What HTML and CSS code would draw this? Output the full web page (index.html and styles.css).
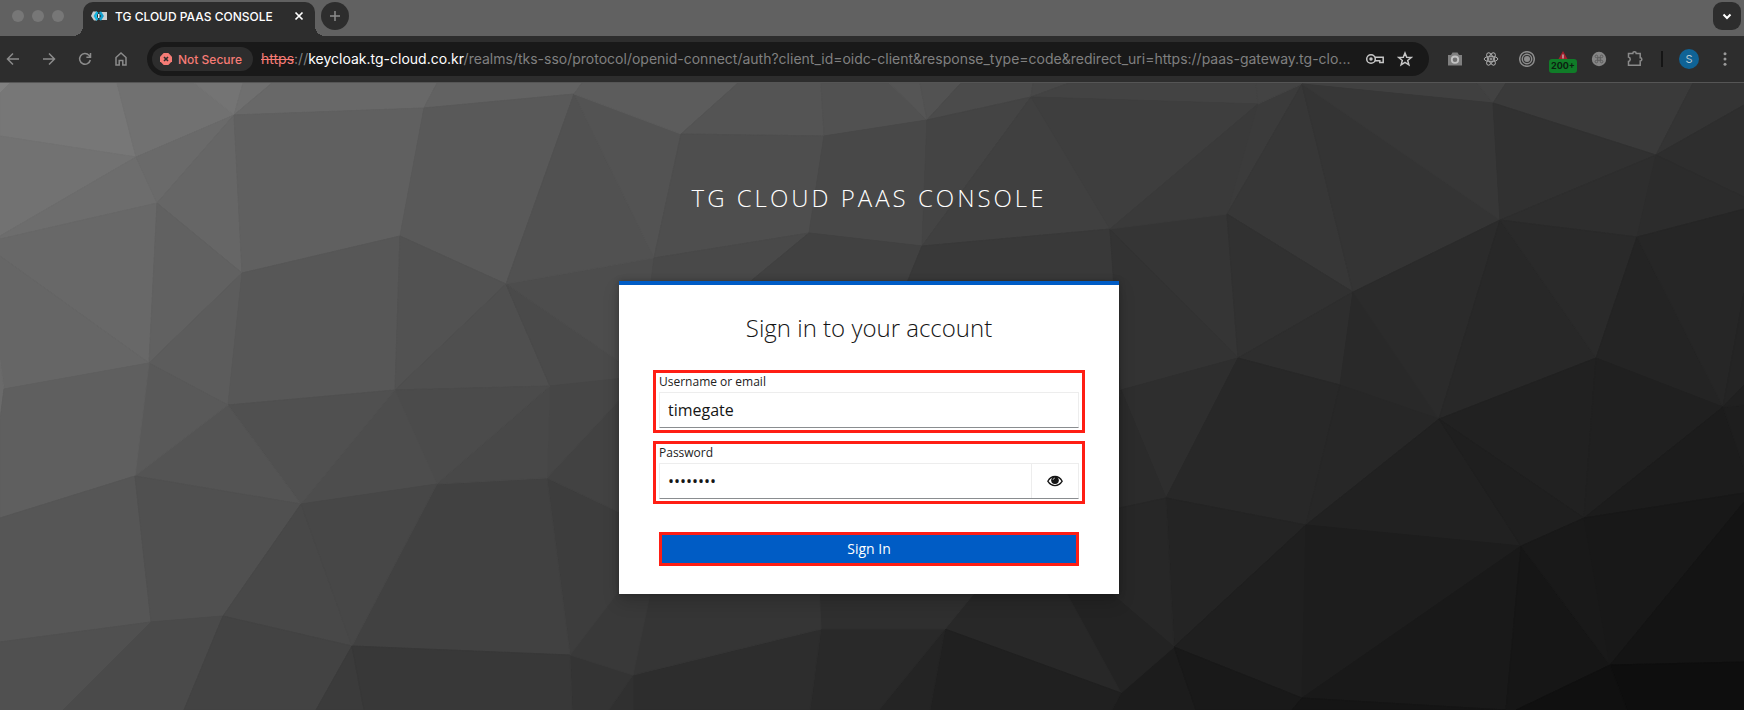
FILE: index.html
```html
<!DOCTYPE html>
<html lang="en">
<head>
<meta charset="utf-8">
<meta name="viewport" content="width=device-width, initial-scale=1">
<title>TG CLOUD PAAS CONSOLE</title>
<link rel="stylesheet" href="styles.css">
</head>
<body>
<header class="browser">
  <div class="tabstrip">
    <div class="lights"><span class="light"></span><span class="light"></span><span class="light"></span></div>
    <div class="tab">
      <svg class="favicon" viewBox="0 0 16 12" aria-hidden="true">
        <path d="M2 1.500h4v9H3L0 6zM10 2h6v8h-6z" fill="#c9cdcf"/>
        <path d="M6.500 2 4 6l2.500 4" fill="none" stroke="#12b5e0" stroke-width="2.400"/>
        <path d="M9 2 11.500 6 9 10" fill="none" stroke="#0f9fd0" stroke-width="2.400"/>
        <path d="M7 4h1.500v4H7z" fill="#e8f4f8"/>
      </svg>
      <span class="tab-title">TG CLOUD PAAS CONSOLE</span>
      <button class="tab-close" type="button" aria-label="Close tab">
        <svg viewBox="0 0 10 10" width="10" height="10"><path d="M1.500 1.500l7 7M8.500 1.500l-7 7" stroke="#fff" stroke-width="1.700" fill="none"/></svg>
      </button>
    </div>
    <button class="round-button" type="button" aria-label="New tab">
      <svg viewBox="0 0 12 12" width="12" height="12"><path d="M6 1v10M1 6h10" stroke="#8c8c8c" stroke-width="1.500"/></svg>
    </button>
    <button class="round-button tab-search" type="button" aria-label="Search tabs">
      <svg viewBox="0 0 10 10" width="10" height="10"><path d="M1.500 3.500 5 7l3.500-3.500" stroke="#fff" stroke-width="2" fill="none"/></svg>
    </button>
  </div>
  <div class="toolbar">
    <nav class="nav" aria-label="Browser navigation">
      <button class="icon-button" type="button" aria-label="Back"><svg viewBox="0 0 16 16"><path d="M14 8H3M8 2.500 2.500 8 8 13.500"/></svg></button>
      <button class="icon-button" type="button" aria-label="Forward"><svg viewBox="0 0 16 16"><path d="M2 8h11M8 2.500 13.500 8 8 13.500"/></svg></button>
      <button class="icon-button" type="button" aria-label="Reload"><svg viewBox="0 0 16 16"><path d="M13.300 9A5.400 5.400 0 1 1 12 4.200L13.500 6M13.500 2v4.200H9.400"/></svg></button>
      <button class="icon-button" type="button" aria-label="Home"><svg viewBox="0 0 16 16"><path d="M3 6.500 8 2l5 4.500V14H9.800V9.500H6.200V14H3z"/></svg></button>
    </nav>
    <div class="address">
      <button class="security" type="button">
        <svg viewBox="0 0 12 12" width="12" height="12" aria-hidden="true"><path d="M3.700 0h4.600L12 3.700v4.600L8.300 12H3.700L0 8.300V3.700z" fill="#f67c76"/><path d="M4 4l4 4M8 4L4 8" stroke="#2d2d2d" stroke-width="1.600"/></svg>
        Not Secure
      </button>
      <p class="url"><s class="scheme">https</s>://<span class="host">keycloak.tg-cloud.co.kr</span>/realms/tks-sso/protocol/openid-connect/auth?client_id=oidc-client&amp;response_type=code&amp;redirect_uri=https://paas-gateway.tg-clo...</p>
      <div class="address-actions">
        <button class="icon-button bright" type="button" aria-label="Manage passwords"><svg class="key" viewBox="0 0 20 14"><circle cx="6" cy="7" r="4.300"/><circle cx="6" cy="7" r="1" fill="#c7c7c7"/><path d="M10 5.200h8.200v5.300h-3.400V8.800H10"/></svg></button>
        <button class="icon-button bright" type="button" aria-label="Bookmark"><svg viewBox="0 0 16 16"><path d="M8 2l1.700 4.200 4.500.3-3.500 2.900 1.200 4.400L8 11.400l-3.900 2.400 1.200-4.400-3.500-2.900 4.500-.3z"/></svg></button>
      </div>
    </div>
    <div class="extensions">
      <button class="icon-button" type="button" aria-label="Screenshot"><svg viewBox="0 0 16 16"><path d="M1 4h3l1.500-2.500h5L12 4h3v10.500H1z" fill="#7f7f7f" stroke="none"/><circle cx="8" cy="8.700" r="3.200" stroke="#c2c2c2" stroke-width="1.800" fill="#707070"/></svg></button>
      <button class="icon-button" type="button" aria-label="React tools"><svg viewBox="0 0 16 16" class="react"><ellipse cx="8" cy="8" rx="6.800" ry="2.700"/><ellipse cx="8" cy="8" rx="6.800" ry="2.700" transform="rotate(60 8 8)"/><ellipse cx="8" cy="8" rx="6.800" ry="2.700" transform="rotate(120 8 8)"/><circle cx="8" cy="8" r="1"/></svg></button>
      <button class="icon-button" type="button" aria-label="Recorder"><svg viewBox="0 0 16 16"><circle cx="8" cy="8" r="7.300"/><circle cx="8" cy="8" r="4.700"/><circle cx="8" cy="8" r="2.300" fill="#8b8b8b"/></svg></button>
      <button class="icon-button alerts" type="button" aria-label="Alerts, 200+"><svg viewBox="0 0 16 16"><path d="M8 0l4.500 8h-9z" fill="#a31f2c" stroke="none"/><path d="M8 3.500v4" stroke="#ccc" stroke-width="1.200"/></svg><span class="badge">200+</span></button>
      <button class="icon-button" type="button" aria-label="Shortcuts"><svg viewBox="0 0 16 16"><circle cx="8" cy="8" r="7.200" fill="#858585" stroke="none"/><path d="M6.700 6.700h2.600v2.600H6.700zM6.700 6.700H5.400A1.300 1.300 0 1 1 6.700 5.400zM9.300 6.700V5.400A1.300 1.300 0 1 1 10.600 6.700zM9.300 9.300H10.600A1.300 1.300 0 1 1 9.300 10.600zM6.700 9.300V10.600A1.300 1.300 0 1 1 5.400 9.300z" stroke="#5a5a5a" stroke-width=".9"/></svg></button>
      <button class="icon-button" type="button" aria-label="Extensions"><svg viewBox="0 0 16 16"><path d="M1.500 2.500h4.300a1.700 1.700 0 0 1 3.400 0h4v4.200a1.600 1.600 0 0 1 0 3.200v4.300H1.500v-3.800a2.200 2.200 0 0 0 0-4.300z"/></svg></button>
      <span class="divider"></span>
      <button class="avatar" type="button" aria-label="Profile">S</button>
      <button class="icon-button" type="button" aria-label="Menu"><svg viewBox="0 0 16 16"><g fill="#9a9a9a" stroke="none"><circle cx="8" cy="2.700" r="1.500"/><circle cx="8" cy="8" r="1.500"/><circle cx="8" cy="13.300" r="1.500"/></g></svg></button>
    </div>
  </div>
</header>

<main class="page">
  <svg class="backdrop" viewBox="0 83 1744 627" preserveAspectRatio="none" aria-hidden="true">
    <polygon color="#808080" points="0,83 10,83 0,93"/>
    <polygon color="#777777" points="10,83 117,83 136,157 0,136 0,93"/>
    <polygon color="#717171" points="117,83 194,83 234,115 136,157"/>
    <polygon color="#747474" points="194,83 243,83 234,115"/>
    <polygon color="#6f6f6f" points="243,83 272,83 234,115"/>
    <polygon color="#686868" points="272,83 437,83 424,108 234,115"/>
    <polygon color="#626262" points="437,83 582,83 574,94 424,108"/>
    <polygon color="#727272" points="0,136 136,157 0,236"/>
    <polygon color="#6d6d6d" points="0,236 136,157 157,203 0,239"/>
    <polygon color="#6a6a6a" points="136,157 234,115 157,203"/>
    <polygon color="#666666" points="234,115 157,203 242,273"/>
    <polygon color="#606060" points="234,115 424,108 400,236 242,273"/>
    <polygon color="#595959" points="424,108 574,94 506,284 400,236"/>
    <polygon color="#686868" points="0,239 157,203 149,363 0,256"/>
    <polygon color="#666666" points="0,256 149,363 4,389 0,360"/>
    <polygon color="#6a6a6a" points="0,360 4,389 0,420"/>
    <polygon color="#616161" points="157,203 242,273 149,363"/>
    <polygon color="#5c5c5c" points="242,273 149,363 228,405"/>
    <polygon color="#575757" points="242,273 400,236 395,390 228,405"/>
    <polygon color="#525252" points="400,236 506,284 395,390"/>
    <polygon color="#4f4f4f" points="506,284 395,390 550,386"/>
    <polygon color="#4a4a4a" points="506,284 550,386 640,377 640,376"/>
    <polygon color="#4d4d4d" points="506,284 654,258 640,376"/>
    <polygon color="#515151" points="574,94 506,284 654,258"/>
    <polygon color="#535353" points="574,94 681,134 654,258"/>
    <polygon color="#5c5c5c" points="582,83 738,83 681,134 574,94"/>
    <polygon color="#545454" points="738,83 821,83 824,136 681,134"/>
    <polygon color="#515151" points="821,83 889,83 927,120 824,136"/>
    <polygon color="#555555" points="889,83 920,83 927,120"/>
    <polygon color="#525252" points="920,83 961,83 927,120"/>
    <polygon color="#4b4b4b" points="961,83 1033,83 1031,97 927,120"/>
    <polygon color="#484848" points="1033,83 1069,83 1031,97"/>
    <polygon color="#434343" points="1069,83 1256,83 1258,104 1031,97"/>
    <polygon color="#4e4e4e" points="681,134 824,136 809,233 654,258"/>
    <polygon color="#484848" points="824,136 927,120 922,246 809,233"/>
    <polygon color="#444444" points="927,120 1031,97 922,246"/>
    <polygon color="#404040" points="1031,97 922,246 1110,229"/>
    <polygon color="#3e3e3e" points="1031,97 1258,104 1110,229"/>
    <polygon color="#494949" points="654,258 809,233 740,290 650,290"/>
    <polygon color="#414141" points="809,233 922,246 904,290 740,290"/>
    <polygon color="#393939" points="922,246 1110,229 1115,290 904,290"/>
    <polygon color="#353535" points="1110,229 1227,214 1238,358"/>
    <polygon color="#333333" points="1110,229 1238,358 1121,390"/>
    <polygon color="#3a3a3a" points="1258,104 1227,214 1110,229"/>
    <polygon color="#3b3b3b" points="1258,104 1302,84 1227,214"/>
    <polygon color="#434343" points="1256,83 1302,83 1302,84 1258,104"/>
    <polygon color="#404040" points="1302,83 1477,83 1493,103 1302,84"/>
    <polygon color="#424242" points="1477,83 1506,83 1493,103"/>
    <polygon color="#3a3a3a" points="1506,83 1693,83 1656,155 1493,103"/>
    <polygon color="#343434" points="1693,83 1744,83 1744,105 1656,155"/>
    <polygon color="#2e2e2e" points="1744,105 1656,155 1744,197"/>
    <polygon color="#373737" points="1302,84 1227,214 1353,292"/>
    <polygon color="#343434" points="1302,84 1353,292 1500,220"/>
    <polygon color="#373737" points="1302,84 1493,103 1500,220"/>
    <polygon color="#313131" points="1493,103 1656,155 1500,220"/>
    <polygon color="#2e2e2e" points="1656,155 1500,220 1637,237"/>
    <polygon color="#2c2c2c" points="1656,155 1637,237 1744,209 1744,197"/>
    <polygon color="#313131" points="1227,214 1353,292 1238,358"/>
    <polygon color="#2e2e2e" points="1238,358 1353,292 1340,385"/>
    <polygon color="#292929" points="1353,292 1340,385 1439,419"/>
    <polygon color="#2b2b2b" points="1353,292 1500,220 1439,419"/>
    <polygon color="#282828" points="1500,220 1439,419 1596,358"/>
    <polygon color="#2a2a2a" points="1500,220 1637,237 1596,358"/>
    <polygon color="#242424" points="1637,237 1596,358 1723,407"/>
    <polygon color="#262626" points="1637,237 1744,209 1744,293 1723,407"/>
    <polygon color="#242424" points="1744,293 1744,385 1723,407"/>
    <polygon color="#212121" points="1596,358 1439,419 1584,518"/>
    <polygon color="#202020" points="1596,358 1584,518 1723,407"/>
    <polygon color="#2e2e2e" points="1238,358 1121,390 1166,498"/>
    <polygon color="#2b2b2b" points="1121,390 1166,498 1110,511"/>
    <polygon color="#282828" points="1238,358 1340,385 1306,525 1166,498"/>
    <polygon color="#272727" points="1340,385 1439,419 1306,525"/>
    <polygon color="#212121" points="1439,419 1306,525 1521,546"/>
    <polygon color="#1f1f1f" points="1439,419 1521,546 1584,518"/>
    <polygon color="#1c1c1c" points="1584,518 1723,407 1744,468 1744,493"/>
    <polygon color="#1e1e1e" points="1723,407 1744,405 1744,468"/>
    <polygon color="#202020" points="1723,407 1744,385 1744,405"/>
    <polygon color="#242424" points="1166,498 1306,525 1174,647"/>
    <polygon color="#272727" points="1166,498 1174,647 1105,588 1105,511"/>
    <polygon color="#1f1f1f" points="1306,525 1174,647 1302,698"/>
    <polygon color="#1d1d1d" points="1306,525 1521,546 1302,698"/>
    <polygon color="#191919" points="1521,546 1302,698 1506,710"/>
    <polygon color="#161616" points="1521,546 1610,665 1516,710 1506,710"/>
    <polygon color="#191919" points="1521,546 1584,518 1610,665"/>
    <polygon color="#181818" points="1584,518 1744,493 1744,502 1610,665"/>
    <polygon color="#141414" points="1610,665 1744,502 1744,662"/>
    <polygon color="#0e0e0e" points="1610,665 1744,662 1744,710 1627,710"/>
    <polygon color="#101010" points="1610,665 1627,710 1516,710"/>
    <polygon color="#1c1c1c" points="1174,647 1121,693 1112,710 1196,710"/>
    <polygon color="#191919" points="1174,647 1196,710 1292,710 1302,698"/>
    <polygon color="#151515" points="1302,698 1292,710 1506,710"/>
    <polygon color="#232323" points="1174,647 1121,693 1062,585 1105,588"/>
    <polygon color="#282828" points="945,629 1121,693 1062,585 981,585"/>
    <polygon color="#202020" points="945,629 1121,693 1112,710 930,710"/>
    <polygon color="#242424" points="945,629 930,710 879,710"/>
    <polygon color="#292929" points="821,629 945,629 879,710 810,710"/>
    <polygon color="#2d2d2d" points="821,629 810,710 633,710 633,675"/>
    <polygon color="#303030" points="633,675 633,710 609,710"/>
    <polygon color="#343434" points="570,655 633,675 609,710 572,710"/>
    <polygon color="#2f2f2f" points="821,629 945,629 981,585 819,585"/>
    <polygon color="#353535" points="633,675 821,629 819,585 652,585"/>
    <polygon color="#393939" points="570,655 633,675 652,585 623,585"/>
    <polygon color="#3d3d3d" points="547,478 570,655 625,583 625,515"/>
    <polygon color="#414141" points="437,484 547,478 570,655 352,646"/>
    <polygon color="#424242" points="547,478 625,394 625,515"/>
    <polygon color="#464646" points="550,386 547,478 625,394 625,378"/>
    <polygon color="#484848" points="550,386 437,484 547,478"/>
    <polygon color="#4b4b4b" points="395,390 550,386 437,484"/>
    <polygon color="#4d4d4d" points="395,390 437,484 301,504"/>
    <polygon color="#505050" points="395,390 228,405 301,504"/>
    <polygon color="#545454" points="228,405 135,476 301,504"/>
    <polygon color="#595959" points="149,363 228,405 135,476"/>
    <polygon color="#5f5f5f" points="4,389 149,363 135,476 0,518 0,420"/>
    <polygon color="#565656" points="0,518 135,476 151,622 0,642"/>
    <polygon color="#505050" points="135,476 301,504 223,616 151,622"/>
    <polygon color="#484848" points="301,504 223,616 352,646"/>
    <polygon color="#474747" points="301,504 437,484 352,646"/>
    <polygon color="#505050" points="0,642 151,622 63,710 0,710"/>
    <polygon color="#4a4a4a" points="151,622 223,616 184,710 63,710"/>
    <polygon color="#434343" points="223,616 184,710 316,710 352,646"/>
    <polygon color="#3b3b3b" points="352,646 316,710 364,710"/>
    <polygon color="#383838" points="352,646 364,710 572,710 570,655"/>
  </svg>

  <div class="brand">TG CLOUD PAAS CONSOLE</div>

  <section class="card">
    <h1 class="card-title">Sign in to your account</h1>
    <form>
      <div class="field">
        <label for="username">Username or email</label>
        <div class="control"><input id="username" type="text" value="timegate"></div>
      </div>
      <div class="field">
        <label for="password">Password</label>
        <div class="control">
          <input id="password" type="password" value="timegate">
          <button class="reveal" type="button" aria-label="Show password">
            <svg viewBox="0 0 16 12" width="16" height="12"><path d="M.8 6.200C2.500 3.200 5 1.500 8 1.500s5.500 1.700 7.200 4.700C13.500 9 11 10.600 8 10.600S2.500 9 .8 6.200z" fill="none" stroke="#151515" stroke-width="1.300"/><circle cx="8" cy="5.300" r="3.800" fill="#151515"/><path d="M6 5A2.200 2.200 0 0 1 8 3" fill="none" stroke="#fff" stroke-width=".6"/></svg>
          </button>
        </div>
      </div>
      <button class="submit" type="submit">Sign In</button>
    </form>
  </section>
</main>
</body>
</html>
```
FILE: styles.css
```css
* { box-sizing: border-box; }

body {
  margin: 0;
  min-height: 100vh;
  display: flex;
  flex-direction: column;
  font-family: "Open Sans", "Noto Sans", sans-serif;
  background: #2d2d2d;
}

button {
  margin: 0;
  padding: 0;
  border: 0;
  background: none;
  font: inherit;
  color: inherit;
}

/* Browser chrome */
.browser {
  font-family: Inter, Roboto, sans-serif;
  background: #2d2d2d;
  border-bottom: 1px solid #555;
}

.tabstrip {
  display: flex;
  align-items: flex-start;
  height: 36px;
  padding: 2px 3px 0 12px;
  background: #616161;
}

.lights {
  display: flex;
  gap: 8px;
  padding-top: 8px;
  margin-right: 19px;
}

.light {
  width: 12px;
  height: 12px;
  border-radius: 50%;
  background: #777;
}

.tab {
  position: relative;
  display: flex;
  align-items: center;
  width: 232px;
  height: 34px;
  padding: 0 10px 6px 8px;
  border-radius: 10px 10px 0 0;
  background: #2d2d2d;
}

.tab::before,
.tab::after {
  content: "";
  position: absolute;
  bottom: 0;
  width: 10px;
  height: 10px;
}

.tab::before {
  left: -10px;
  background: radial-gradient(circle at 0 0, transparent 10px, #2d2d2d 10px);
}

.tab::after {
  right: -10px;
  background: radial-gradient(circle at 100% 0, transparent 10px, #2d2d2d 10px);
}

.favicon {
  width: 16px;
  height: 12px;
  margin-right: 8px;
}

.tab-title {
  flex: 1;
  font-size: 12px;
  font-weight: 500;
  white-space: nowrap;
  color: #fff;
}

.tab-close {
  display: grid;
  place-items: center;
  width: 12px;
  height: 12px;
}

.round-button {
  display: grid;
  place-items: center;
  width: 28px;
  height: 28px;
  margin-left: 6px;
  border-radius: 50%;
  background: #2d2d2d;
}

.tab-search {
  margin-left: auto;
  border-radius: 9px;
}

.toolbar {
  display: flex;
  align-items: center;
  height: 46px;
  padding: 0 11px 0 5px;
}

.nav,
.extensions {
  display: flex;
  align-items: center;
  gap: 20px;
}

.icon-button {
  position: relative;
  display: grid;
  place-items: center;
  width: 16px;
  height: 16px;
}

.icon-button svg {
  width: 16px;
  height: 16px;
  fill: none;
  stroke: #8b8b8b;
  stroke-width: 1.500;
}

.icon-button.bright svg { stroke: #c7c7c7; }
.icon-button .key { width: 20px; height: 14px; }
.icon-button .react { stroke: #a8a8a8; stroke-width: 1; }

.address {
  flex: 1;
  display: flex;
  align-items: center;
  min-width: 0;
  height: 34px;
  margin: 0 18px;
  padding: 0 16px 0 5px;
  border-radius: 17px;
  background: #191919;
}

.security {
  flex: none;
  display: flex;
  align-items: center;
  gap: 6px;
  height: 24px;
  margin-right: 8px;
  padding: 0 11px 0 8px;
  border-radius: 12px;
  background: #2d2d2d;
  font-size: 12px;
  font-weight: 500;
  color: #f67c76;
}

.url {
  flex: 1;
  min-width: 0;
  margin: 0 8px 0 0;
  overflow: hidden;
  text-overflow: ellipsis;
  white-space: nowrap;
  font-size: 14px;
  line-height: 20px;
  color: #808080;
}

.scheme { color: #f67c76; }
.host { color: #fff; }

.address-actions {
  display: flex;
  gap: 16px;
}

.alerts .badge {
  position: absolute;
  left: -6px;
  top: 8px;
  width: 28px;
  height: 14px;
  border-radius: 3px;
  background: #107c28;
  font-size: 9px;
  font-weight: 700;
  line-height: 14px;
  text-align: center;
  color: #0c1f10;
}

.divider {
  width: 2px;
  height: 16px;
  margin: 0 -4px 0 -2px;
  background: #151515;
}

.avatar {
  width: 20px;
  height: 20px;
  margin-right: -2px;
  border-radius: 50%;
  background: #0f6396;
  font-size: 11px;
  color: #b8c8d2;
}

/* Login page */
.page {
  position: relative;
  flex: 1;
  display: flex;
  flex-direction: column;
  align-items: center;
  padding: 97px 6px 40px 0;
}

.backdrop {
  position: absolute;
  inset: 0;
  width: 100%;
  height: 100%;
}

.backdrop polygon {
  fill: currentColor;
  stroke: currentColor;
}

.brand {
  position: relative;
  margin-bottom: 65px;
  font-size: 24px;
  font-weight: 300;
  line-height: 36px;
  letter-spacing: 3px;
  color: #fff;
}

.card {
  position: relative;
  width: 100%;
  max-width: 500px;
  padding: 27px 34px 28px;
  border-top: 4px solid #005cc5;
  background: #fff;
  box-shadow: 0 8px 16px rgba(3, 3, 3, 0.16), 0 0 6px rgba(3, 3, 3, 0.24);
}

.card-title {
  margin: 0 0 26px;
  font-size: 24px;
  font-weight: 300;
  line-height: 32px;
  text-align: center;
  color: #151515;
}

.field {
  margin-bottom: 8px;
  padding: 0 3px 2px;
  border: 3px solid #ff1e14;
}

.field label {
  display: block;
  padding-bottom: 2px;
  font-size: 12px;
  line-height: 17px;
  color: #222;
}

.control {
  display: flex;
  height: 36px;
  border: 1px solid #ededed;
  border-bottom-color: #8a8d90;
}

.control input {
  flex: 1;
  min-width: 0;
  padding: 0 8px;
  border: 0;
  outline: 0;
  background: #fff;
  font: 16px/24px "Open Sans", "Noto Sans", sans-serif;
  color: #151515;
}

.reveal {
  display: grid;
  place-items: center;
  width: 47px;
  border-left: 1px solid #ededed;
}

.submit {
  display: block;
  width: calc(100% - 12px);
  height: 34px;
  margin: 28px 6px 0;
  border: 3px solid #ff1e14;
  background: #005cc5;
  font-size: 14px;
  font-weight: 500;
  line-height: 20px;
  color: #fff;
}
```
